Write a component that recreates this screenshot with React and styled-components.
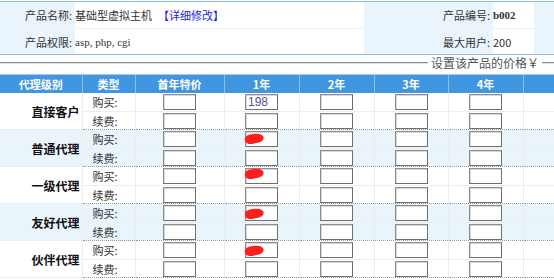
import React from 'react';
import styled, { createGlobalStyle } from 'styled-components';

const GlobalStyle = createGlobalStyle`
    body {
        margin: 0;
        overflow: hidden;
        background: #fff;
        font-family: "Noto Sans CJK SC", "Liberation Sans", sans-serif;
        font-size: 11px;
        color: #333;
    }
`;

const Page = styled.div`
    width: 640px;
    padding-top: 1px;
`;

const InfoTable = styled.table`
    width: 100%;
    border-collapse: collapse;
    border-top: 1px solid #8fbde8;
    border-bottom: 1px solid #8fbde8;

    td {
        height: 25px;
        padding: 0;
    }

    tr:first-child td {
        height: 26px;
        border-bottom: 1px solid #f1f1f1;
    }
`;

const Label = styled.td`
    background: #eaf4fc;
    text-align: right;
    white-space: nowrap;
    color: #333;
    padding-right: 3px !important;
`;

const Value = styled.td`
    background: #fff;
    white-space: nowrap;
    font-family: ${p => (p.$serif ? '"Liberation Serif", serif' : 'inherit')};
    font-weight: ${p => (p.$bold ? 'bold' : 'normal')};
`;

const Filler = styled.td`
    background: #eaf4fc;
`;

const EditLink = styled.a`
    color: #1d1de6;
    text-decoration: none;
    margin-left: 6px;
`;

const PriceSet = styled.fieldset`
    margin: 0;
    padding: 3px 0 0;
    border: none;
    border-top: 2px groove #e2e2e2;
    min-width: 0;
`;

const Legend = styled.legend`
    margin-left: 428px;
    padding: 0 3px;
    line-height: 16px;
    color: #555;
    font-size: 12px;
`;

const PriceTable = styled.table`
    width: 640px;
    table-layout: fixed;
    border-collapse: collapse;
`;

const HeadCell = styled.th`
    height: 18px;
    padding: 0;
    background: #4196e2;
    color: #fff;
    font-weight: bold;
    font-size: 11px;
    border-top: 1px solid #9ccaf2;
    border-right: 1px solid #8ec0ee;
    text-align: center;
`;

const Row = styled.tr`
    background: ${p => (p.$shade ? '#eaf4fb' : '#fff')};

    td {
        height: ${p => (p.$last ? 17 : 18)}px;
        border-right: 1px solid #ececec;
        border-bottom: ${p => (p.$last ? '1px dotted #9a9a9a' : '1px solid #eeeeee')};
    }
`;

const NameCell = styled.td`
    padding: 0 2px 0 0;
    text-align: right;
    font-weight: bold;
    font-size: 12px;
    color: #111;
    vertical-align: middle;
`;

const TypeCell = styled.td`
    padding: 0 0 0 10px;
    text-align: left;
    color: #333;
`;

const PriceCell = styled.td`
    position: relative;
    padding: 0;
    text-align: center;
`;

const PriceInput = styled.input`
    display: block;
    box-sizing: border-box;
    width: 33px;
    height: 16px;
    margin: 0 auto;
    padding: 0 2px;
    border: 1px solid #8c8c8c;
    border-right-color: #6e6e6e;
    border-bottom-color: #6e6e6e;
    box-shadow: inset 1px 1px 0 #d8d8d8;
    background: #fff;
    font-family: "Liberation Sans", sans-serif;
    font-size: 12px;
    color: #5a4b9c;
    outline: none;
`;

const Blob = styled.svg`
    position: absolute;
    left: 19px;
    top: ${p => p.$top}px;
    width: 20px;
    height: 12px;
`;

const levels = [
    { name: '直接客户', first: '198' },
    { name: '普通代理', blob: 3 },
    { name: '一级代理', blob: 1 },
    { name: '友好代理', blob: 4 },
    { name: '伙伴代理', blob: 4 },
];

const columns = ['首年特价', '1年', '2年', '3年', '4年', '5年'];

const Scribble = ({ top }) => (
    <Blob $top={top} viewBox="0 0 20 12">
        <path d="M1 7.5 C0 3.5 4 1.5 9 1 C14 0.2 19 1 19.6 4.5 C20 8 15.5 10 11 10.2 C7 11.8 2 11.5 1 7.5 Z" fill="#ff1e1e" />
    </Blob>
);

const LevelRows = ({ level, shade }) => (
    <>
        <Row $shade={shade}>
            <NameCell rowSpan={2}>{level.name}</NameCell>
            <TypeCell>购买:</TypeCell>
            {columns.map((c, i) => (
                <PriceCell key={c}>
                    <PriceInput defaultValue={i === 1 && level.first ? level.first : ''} />
                    {i === 1 && level.blob !== undefined && <Scribble top={level.blob} />}
                </PriceCell>
            ))}
        </Row>
        <Row $shade={shade} $last>
            <TypeCell>续费:</TypeCell>
            {columns.map(c => (
                <PriceCell key={c}>
                    <PriceInput defaultValue="" />
                </PriceCell>
            ))}
        </Row>
    </>
);

const App = () => {
    return (
        <Page>
            <GlobalStyle />
            <InfoTable>
                <colgroup>
                    <col style={{ width: 75 }} />
                    <col style={{ width: 289 }} />
                    <col style={{ width: 129 }} />
                    <col style={{ width: 41 }} />
                    <col />
                </colgroup>
                <tbody>
                    <tr>
                        <Label>产品名称:</Label>
                        <Value>基础型虚拟主机<EditLink href="#">【详细修改】</EditLink></Value>
                        <Label>产品编号:</Label>
                        <Value $serif $bold>b002</Value>
                        <Filler />
                    </tr>
                    <tr>
                        <Label>产品权限:</Label>
                        <Value $serif>asp, php, cgi</Value>
                        <Label>最大用户:</Label>
                        <Value>200</Value>
                        <Filler />
                    </tr>
                </tbody>
            </InfoTable>
            <PriceSet>
                <Legend>设置该产品的价格￥</Legend>
                <PriceTable>
                    <colgroup>
                        <col style={{ width: 82 }} />
                        <col style={{ width: 53 }} />
                        <col style={{ width: 89 }} />
                        <col style={{ width: 75 }} />
                        <col style={{ width: 75 }} />
                        <col style={{ width: 74 }} />
                        <col style={{ width: 75 }} />
                        <col style={{ width: 117 }} />
                    </colgroup>
                    <thead>
                        <tr>
                            <HeadCell>代理级别</HeadCell>
                            <HeadCell>类型</HeadCell>
                            {columns.map(c => <HeadCell key={c}>{c}</HeadCell>)}
                        </tr>
                    </thead>
                    <tbody>
                        {levels.map((level, i) => (
                            <LevelRows key={level.name} level={level} shade={i % 2 === 1} />
                        ))}
                    </tbody>
                </PriceTable>
            </PriceSet>
        </Page>
    );
};

export default App;
